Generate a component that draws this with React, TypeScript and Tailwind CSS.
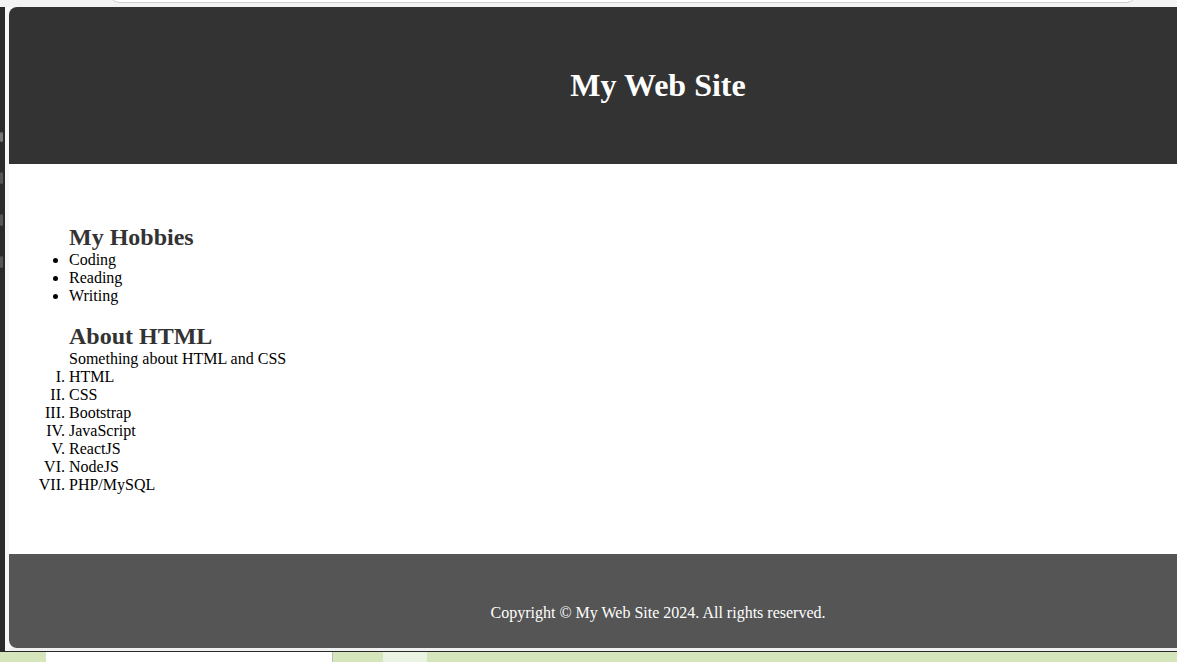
const hobbies = ['Coding', 'Reading', 'Writing'];
const skills = ['HTML', 'CSS', 'Bootstrap', 'JavaScript', 'ReactJS', 'NodeJS', 'PHP/MySQL'];

const Page = () => (
  <div className="flex h-full w-[1298px] flex-col bg-white font-['Liberation_Serif',serif] text-black">
    <header className="flex h-[157px] shrink-0 items-center justify-center bg-[#333333]">
      <h1 className="text-[32px] font-bold leading-[37px] text-white">My Web Site</h1>
    </header>

    <main className="h-[390px] shrink-0 px-5 pt-[60px]">
      <ul className="list-disc ps-10 text-base leading-[18px]">
        <h2 className="text-2xl font-bold leading-[27px] text-[#333333]">My Hobbies</h2>
        {hobbies.map((hobby) => (
          <li key={hobby}>{hobby}</li>
        ))}
      </ul>
      <ol className="mt-[18px] list-[upper-roman] ps-10 text-base leading-[18px]">
        <h2 className="text-2xl font-bold leading-[27px] text-[#333333]">About HTML</h2>
        <p>Something about HTML and CSS</p>
        {skills.map((skill) => (
          <li key={skill}>{skill}</li>
        ))}
      </ol>
    </main>

    <footer className="flex-1 bg-[#555555] pt-[50px] text-center text-base leading-[18px] text-white">
      Copyright © My Web Site 2024. All rights reserved.
    </footer>
  </div>
);

export default function App() {
  return (
    <div className="flex h-[662px] w-[1177px] flex-col overflow-hidden bg-[#f3f3f3]">
      {/* browser chrome strip */}
      <div className="relative h-[7px] shrink-0 bg-[#f3f3f3]">
        <div className="absolute left-[108px] top-[-12px] h-[15px] w-[1030px] rounded-b-xl border border-[#cfcfcf] bg-white" />
      </div>

      <div className="flex min-h-0 flex-1">
        <div className="flex w-[5px] shrink-0 flex-col gap-[30px] bg-[#2a2a2a] pt-[125px]">
          <span className="h-[10px] w-[3px] rounded-sm bg-[#777]" />
          <span className="h-[12px] w-[3px] rounded-sm bg-[#555]" />
          <span className="h-[12px] w-[3px] rounded-sm bg-[#555]" />
          <span className="h-[12px] w-[3px] rounded-sm bg-[#555]" />
        </div>
        <div className="flex min-w-0 flex-1 flex-col bg-[#f7f7f7] pl-1">
          <div className="min-h-0 flex-1 overflow-hidden rounded-l-lg">
            <Page />
          </div>
          <div className="h-[3px] shrink-0 bg-[#f0f0f0]" />
        </div>
      </div>

      {/* taskbar */}
      <div className="h-px shrink-0 bg-[#2a2a2a]" />
      <div className="flex h-[10px] shrink-0 bg-[#d5e6bd]">
        <div className="w-[46px]" />
        <div className="w-[287px] border-r border-[#bbbbbb] bg-white" />
        <div className="w-[50px]" />
        <div className="w-[44px] bg-[#ebf3e2]" />
      </div>
    </div>
  );
}
